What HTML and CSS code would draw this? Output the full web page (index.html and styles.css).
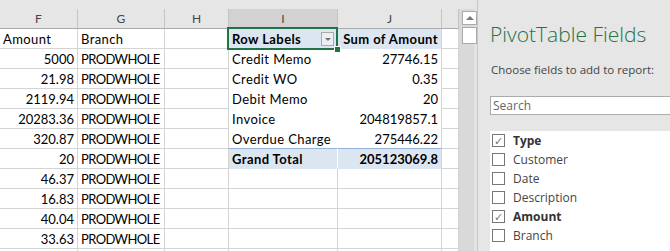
FILE: index.html
```html
<!DOCTYPE html>
<html lang="en">
  <head>
    <meta charset="UTF-8" />
    <title>PivotTable</title>
    <link rel="stylesheet" href="styles.css">
  </head>
  <body>
    <div class="app">
      <div class="sheet">
        <div class="strip"></div>
        <div class="grid">
          <div class="hd">F</div>
          <div class="hd">G</div>
          <div class="hd">H</div>
          <div class="hd sel">I</div>
          <div class="hd">J</div>
          <div class="hd"></div>

          <div class="c">Amount</div>
          <div class="c">Branch</div>
          <div class="c"></div>
          <div class="c pv pv-head">Row Labels<span class="dd"></span></div>
          <div class="c pv pv-head pv-last">Sum of Amount</div>
          <div class="c"></div>

          <div class="c num">5000</div>
          <div class="c caps">PRODWHOLE</div>
          <div class="c"></div>
          <div class="c pv">Credit Memo</div>
          <div class="c pv pv-last num">27746.15</div>
          <div class="c"></div>

          <div class="c num">21.98</div>
          <div class="c caps">PRODWHOLE</div>
          <div class="c"></div>
          <div class="c pv">Credit WO</div>
          <div class="c pv pv-last num">0.35</div>
          <div class="c"></div>

          <div class="c num">2119.94</div>
          <div class="c caps">PRODWHOLE</div>
          <div class="c"></div>
          <div class="c pv">Debit Memo</div>
          <div class="c pv pv-last num">20</div>
          <div class="c"></div>

          <div class="c num">20283.36</div>
          <div class="c caps">PRODWHOLE</div>
          <div class="c"></div>
          <div class="c pv">Invoice</div>
          <div class="c pv pv-last num">204819857.1</div>
          <div class="c"></div>

          <div class="c num">320.87</div>
          <div class="c caps">PRODWHOLE</div>
          <div class="c"></div>
          <div class="c pv pv-sep">Overdue Charge</div>
          <div class="c pv pv-sep pv-last num">275446.22</div>
          <div class="c"></div>

          <div class="c num">20</div>
          <div class="c caps">PRODWHOLE</div>
          <div class="c"></div>
          <div class="c pv pv-total">Grand Total</div>
          <div class="c pv pv-total pv-last num">205123069.8</div>
          <div class="c"></div>

          <div class="c num">46.37</div>
          <div class="c caps">PRODWHOLE</div>
          <div class="c"></div>
          <div class="c"></div>
          <div class="c"></div>
          <div class="c"></div>

          <div class="c num">16.83</div>
          <div class="c caps">PRODWHOLE</div>
          <div class="c"></div>
          <div class="c"></div>
          <div class="c"></div>
          <div class="c"></div>

          <div class="c num">40.04</div>
          <div class="c caps">PRODWHOLE</div>
          <div class="c"></div>
          <div class="c"></div>
          <div class="c"></div>
          <div class="c"></div>

          <div class="c num">33.63</div>
          <div class="c caps">PRODWHOLE</div>
          <div class="c"></div>
          <div class="c"></div>
          <div class="c"></div>
          <div class="c"></div>

          <div class="c"></div>
          <div class="c"></div>
          <div class="c"></div>
          <div class="c"></div>
          <div class="c"></div>
          <div class="c"></div>
        </div>
        <!-- celda activa I1 -->
        <div class="selection"><span class="handle"></span></div>
      </div>

      <div class="vscroll">
        <div class="sbtn"><span class="up"></span></div>
        <div class="thumb"></div>
      </div>

      <div class="pane">
        <div class="pane-title">PivotTable Fields</div>
        <div class="pane-hint">Choose fields to add to report:</div>
        <div class="search">Search</div>
        <ul class="fields">
          <li class="on"><span class="box">&#10003;</span>Type</li>
          <li><span class="box"></span>Customer</li>
          <li><span class="box"></span>Date</li>
          <li><span class="box"></span>Description</li>
          <li class="on"><span class="box">&#10003;</span>Amount</li>
          <li><span class="box"></span>Branch</li>
        </ul>
      </div>
    </div>
  </body>
</html>
```

FILE: styles.css
```css
body {
  margin: 0;
  background: #e6e6e6;
  font-family: Lato, "Liberation Sans", sans-serif;
}

.app {
  display: flex;
  width: 670px;
  height: 251px;
  overflow: hidden;
}

.sheet {
  position: relative;
  width: 459px;
  flex-shrink: 0;
}

.strip {
  height: 9px;
  background: #e6e6e6;
}

.grid {
  display: grid;
  grid-template-columns: 78px 87px 64px 109px 104px 17px;
  grid-auto-rows: 20px;
  background: #fff;
}

.hd {
  box-sizing: border-box;
  background: #e6e6e6;
  border-right: 1px solid #c4c4c4;
  border-bottom: 1px solid #ababab;
  color: #444;
  font-size: 12px;
  line-height: 19px;
  text-align: center;
}

.hd.sel {
  background: #d2d2d2;
}

.c {
  box-sizing: border-box;
  border-right: 1px solid #d4d4d4;
  border-bottom: 1px solid #d4d4d4;
  padding: 1px 3px 0;
  font-size: 13px;
  line-height: 18px;
  letter-spacing: 0.4px;
  color: #000;
  white-space: nowrap;
  overflow: hidden;
}

.num {
  text-align: right;
  letter-spacing: 0;
}

.caps {
  letter-spacing: -0.6px;
}

/* tabla dinámica */
.pv {
  border-color: #fff;
}

.pv-last {
  border-right-color: #d4d4d4;
}

.pv-head {
  display: flex;
  align-items: center;
  justify-content: space-between;
  background: #dce6f1;
  border-bottom-color: #dce6f1;
  font-weight: bold;
}

.pv-head.pv-last {
  justify-content: flex-end;
}

.pv-sep {
  border-bottom-color: #95b3d7;
}

.pv-total {
  background: #dce6f1;
  border-bottom-color: #dce6f1;
  font-weight: bold;
}

.dd {
  position: relative;
  width: 13px;
  height: 14px;
  background: #eceef2;
  border: 1px solid #a9a9a9;
  box-sizing: border-box;
}

.dd::after {
  content: "";
  position: absolute;
  left: 3px;
  top: 5px;
  border-left: 3px solid transparent;
  border-right: 3px solid transparent;
  border-top: 3px solid #707070;
}

.selection {
  position: absolute;
  left: 227px;
  top: 27px;
  width: 111px;
  height: 23px;
  box-sizing: border-box;
  border: 2px solid #217346;
}

.handle {
  position: absolute;
  right: -5px;
  bottom: -5px;
  width: 5px;
  height: 5px;
  background: #217346;
  border: 1px solid #fff;
}

/* barra de desplazamiento */
.vscroll {
  width: 18px;
  margin-top: 9px;
  padding: 2px 0 0 3px;
  background: #d9d9d9;
  border-right: 3px solid #e3e3e3;
  flex-shrink: 0;
  box-sizing: border-box;
}

.sbtn,
.thumb {
  width: 15px;
  box-sizing: border-box;
  background: #fff;
  border: 1px solid #ababab;
}

.sbtn {
  position: relative;
  height: 14px;
}

.up {
  position: absolute;
  left: 3px;
  top: 4px;
  border-left: 4px solid transparent;
  border-right: 4px solid transparent;
  border-bottom: 4px solid #7a7a7a;
}

.thumb {
  height: 17px;
  margin-top: 2px;
}

/* panel de campos */
.pane {
  flex: 1;
  border-left: 1px solid #c6c6c6;
  padding-left: 12px;
  font-family: "Open Sans", "Noto Sans", sans-serif;
}

.pane-title {
  padding-top: 19px;
  font-size: 21px;
  font-weight: 300;
  line-height: 30px;
  color: #217346;
  white-space: nowrap;
}

.pane-hint {
  margin-top: 13px;
  padding-left: 1px;
  font-size: 11.5px;
  line-height: 16px;
  color: #444;
  white-space: nowrap;
}

.search {
  margin-top: 18px;
  height: 19px;
  width: 200px;
  box-sizing: border-box;
  background: #fff;
  border: 1px solid #ababab;
  padding-left: 2px;
  font-size: 12px;
  line-height: 17px;
  color: #666;
}

.fields {
  margin: 16px 0 0;
  padding: 0 0 0 2px;
  list-style: none;
  background: #fff;
  height: 200px;
  font-size: 12px;
  color: #444;
}

.fields li {
  display: flex;
  align-items: center;
  height: 19px;
  white-space: nowrap;
}

.fields li.on {
  font-weight: bold;
  color: #333;
}

.box {
  width: 13px;
  height: 13px;
  box-sizing: border-box;
  border: 1px solid #777;
  margin-right: 8px;
  font-size: 11px;
  line-height: 11px;
  text-align: center;
  color: #777;
  font-weight: normal;
}
```
